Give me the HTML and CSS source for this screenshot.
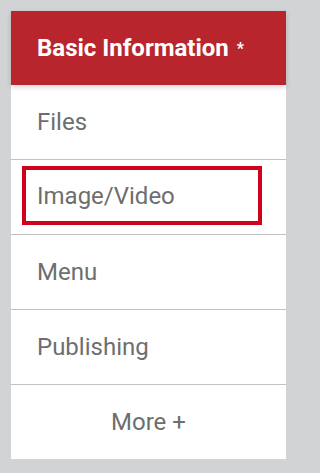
FILE: index.html
```html
<!DOCTYPE html>
<html lang="en">
<head>
<meta charset="utf-8">
<title>Sections</title>
<link rel="stylesheet" href="styles.css">
</head>
<body>
<nav class="panel">
  <div class="header">Basic Information <span class="req">*</span></div>
  <div class="row">Files</div>
  <div class="row row-focus"><span class="focus-box">Image/Video</span></div>
  <div class="row">Menu</div>
  <div class="row">Publishing</div>
  <div class="row row-more">More +</div>
</nav>
</body>
</html>
```
FILE: styles.css
```css
html, body {
  margin: 0;
  padding: 0;
  background: #d2d3d5;
}
body {
  padding: 11px 12px 14px 11px;
  font-family: Roboto, "Liberation Sans", Arial, sans-serif;
}
.panel {
  width: 275px;
  background: #ffffff;
  display: flex;
  flex-direction: column;
}
.header {
  position: relative;
  z-index: 1;
  height: 74px;
  display: flex;
  align-items: center;
  padding-left: 26px;
  background: #b9252d;
  color: #ffffff;
  font-size: 24px;
  font-weight: 700;
  box-shadow: 0 2px 5px rgba(0, 0, 0, 0.18);
  white-space: pre;
}
.req {
  font-size: 16px;
  vertical-align: 4px;
  margin-left: 2px;
}
.row {
  box-sizing: border-box;
  height: 75px;
  display: flex;
  align-items: center;
  padding-left: 26px;
  border-bottom: 1px solid #c2c2c2;
  color: #6e6e6e;
  font-size: 24px;
}
.row-focus {
  padding-left: 0;
  align-items: stretch;
}
.focus-box {
  flex: 1;
  display: flex;
  align-items: center;
  margin: 6px 24px 9px 11px;
  padding-left: 11px;
  border: 4px solid #d0021b;
}
.row-more {
  height: 74px;
  border-bottom: none;
  justify-content: center;
  padding-left: 0;
}
```
